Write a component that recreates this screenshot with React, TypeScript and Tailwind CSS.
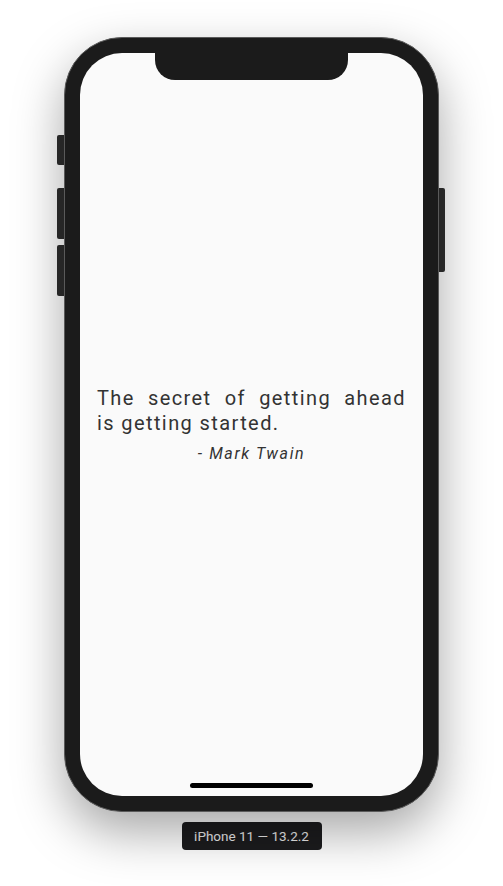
export default function App() {
  return (
    <div className="min-h-[886px] w-full bg-white flex flex-col items-center pt-[37px]">
      {/* Phone */}
      <div className="relative w-[375px] h-[775px]">
        {/* side buttons */}
        <div className="absolute left-[-7px] top-[98px] w-[8px] h-[30px] rounded-l-[2px] bg-[#2e2e2e]" />
        <div className="absolute left-[-7px] top-[151px] w-[8px] h-[51px] rounded-l-[2px] bg-[#2e2e2e]" />
        <div className="absolute left-[-7px] top-[208px] w-[8px] h-[51px] rounded-l-[2px] bg-[#2e2e2e]" />
        <div className="absolute right-[-6px] top-[151px] w-[7px] h-[84px] rounded-r-[2px] bg-[#2e2e2e]" />

        <div className="relative h-full w-full rounded-[58px] bg-[#1b1b1b] border border-[#5a5a5a] p-[15px] shadow-[0_20px_50px_rgba(0,0,0,0.35)]">
          <div className="relative h-full w-full rounded-[42px] bg-[#fafafa] overflow-hidden flex flex-col justify-center px-[17px]">
            {/* notch */}
            <div className="absolute left-[75px] top-0 w-[193px] h-[27px] bg-[#1b1b1b] rounded-b-[20px]" />

            <div
              className="text-[20px] leading-[25px] tracking-[1.4px] text-[#333]"
              style={{ fontFamily: "Roboto, 'Noto Sans', sans-serif" }}
            >
              <p className="text-justify [text-align-last:justify]">
                The secret of getting ahead
              </p>
              <p>is getting started.</p>
            </div>
            <p
              className="mt-[8px] text-center italic text-[16px] leading-[20px] tracking-[1.6px] text-[#333]"
              style={{ fontFamily: "Roboto, 'Noto Sans', sans-serif" }}
            >
              - Mark Twain
            </p>

            {/* home indicator */}
            <div className="absolute bottom-[8px] left-[110px] w-[123px] h-[5px] rounded-full bg-black" />
          </div>
        </div>
      </div>

      <div
        className="mt-[10px] w-[140px] h-[28px] rounded-[4px] bg-[#1c1c1e] flex items-center justify-center text-[13.5px] text-[#ececec]"
        style={{ fontFamily: "Roboto, 'Noto Sans', sans-serif" }}
      >
        iPhone 11 — 13.2.2
      </div>
    </div>
  );
}
